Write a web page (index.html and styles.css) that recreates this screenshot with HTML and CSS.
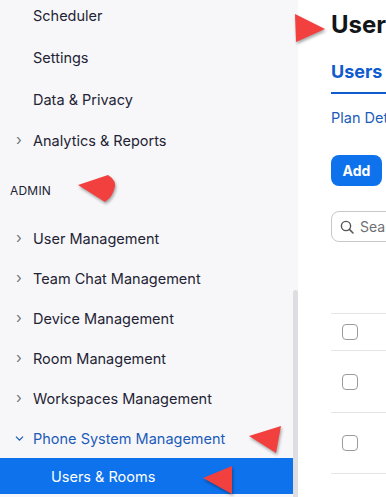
FILE: index.html
```html
<!DOCTYPE html>
<html>
<head>
<meta charset="utf-8">
<link rel="stylesheet" href="styles.css">
</head>
<body>
<div class="page">
  <aside class="sidebar">
    <nav class="nav">
      <ul class="group group-top">
        <li class="item">Scheduler</li>
        <li class="item">Settings</li>
        <li class="item">Data &amp; Privacy</li>
        <li class="item has-chevron short"><span class="chev">›</span>Analytics &amp; Reports</li>
      </ul>
      <div class="section-title">ADMIN</div>
      <ul class="group group-admin">
        <li class="item has-chevron"><span class="chev">›</span>User Management</li>
        <li class="item has-chevron"><span class="chev">›</span>Team Chat Management</li>
        <li class="item has-chevron"><span class="chev">›</span>Device Management</li>
        <li class="item has-chevron"><span class="chev">›</span>Room Management</li>
        <li class="item has-chevron"><span class="chev">›</span>Workspaces Management</li>
        <li class="item has-chevron open"><span class="chev chev-down"><svg width="9" height="6" viewBox="0 0 9 6"><path d="M1 1 L4.5 4.5 L8 1" fill="none" stroke="currentColor" stroke-width="1.3"/></svg></span>Phone System Management</li>
        <li class="sub active">Users &amp; Rooms</li>
      </ul>
    </nav>
    <div class="scrolltrack"><div class="thumb"></div></div>
  </aside>
  <main class="main">
    <h1 class="title">User</h1>
    <div class="tabs"><span class="tab">Users</span></div>
    <a class="plan">Plan Details</a>
    <button class="add">Add</button>
    <div class="search">
      <svg width="14" height="14" viewBox="0 0 14 14"><circle cx="6" cy="6" r="4.6" fill="none" stroke="#555" stroke-width="1.4"/><path d="M9.4 9.4 L13 13" stroke="#555" stroke-width="1.5" stroke-linecap="round"/></svg>
      <span class="ph">Search</span>
    </div>
    <div class="table">
      <div class="thead"></div>
      <div class="row r1"><span class="cb"></span></div>
      <div class="row r2"><span class="cb"></span></div>
      <div class="row r3"><span class="cb"></span></div>
    </div>
  </main>
</div>
<svg class="annot" width="386" height="497" viewBox="0 0 386 497">
  <path d="M295 14 L325 29 L296 42 Z" fill="#f2403f"/>
  <path d="M78 185 L108 175 Q118 181 114 190 Q112 197 105 202 Z" fill="#f2403f"/>
  <path d="M249 436 L281 426 L276 453 Z" fill="#f2403f"/>
  <path d="M203 478 L232 466 L232 494 Z" fill="#f2403f"/>
</svg>
</body>
</html>
```
FILE: styles.css
```css
* { box-sizing: border-box; }
html, body { margin: 0; padding: 0; }
body {
  width: 386px;
  height: 497px;
  overflow: hidden;
  background: #fff;
  font-family: Inter, "Noto Sans", sans-serif;
  position: relative;
}
.page {
  display: flex;
  width: 386px;
  height: 497px;
}
.sidebar {
  width: 298px;
  flex: none;
  background: #f7f7fa;
  display: flex;
  overflow: hidden;
}
.nav {
  width: 293px;
  flex: none;
}
ul { list-style: none; margin: 0; padding: 0; }
.group-top { margin-top: -6px; }
.item {
  height: 42px;
  display: flex;
  align-items: center;
  padding-left: 33px;
  font-size: 14.5px;
  color: #232333;
  position: relative;
}
.item.short { height: 40px; }
.group-admin .item { height: 40px; }
.chev {
  position: absolute;
  left: 14px;
  width: 10px;
  text-align: center;
  color: #6e7680;
  font-size: 15px;
  top: 50%;
  transform: translateY(-55%);
}
.chev-down { transform: translateY(-40%); color: #1c5cb8; line-height: 0; }
.item.open { color: #1c5cb8; }
.section-title {
  height: 58px;
  padding: 23px 0 0 10px;
  font-size: 12px;
  line-height: 16px;
  color: #232333;
  letter-spacing: 0.2px;
}
.sub {
  height: 36px;
  display: flex;
  align-items: center;
  padding-left: 51px;
  font-size: 14.5px;
}
.sub.active {
  background: #0e72ed;
  color: #fff;
}
.scrolltrack {
  width: 5px;
  flex: none;
  padding-top: 290px;
}
.thumb {
  height: 220px;
  background: #dedee2;
  border-radius: 3px 3px 0 0;
}
.main {
  flex: none;
  width: 88px;
  overflow: hidden;
  padding-left: 33px;
  display: flex;
  flex-direction: column;
  align-items: flex-start;
}
.title {
  margin: 11px 0 0;
  font-size: 24px;
  line-height: 28px;
  font-weight: 700;
  color: #131619;
  white-space: nowrap;
}
.tabs {
  margin-top: 22px;
  width: 300px;
  border-bottom: 2px solid #0e5ccd;
  height: 33px;
}
.tab {
  font-size: 18px;
  font-weight: 700;
  color: #0e5ccd;
  line-height: 22px;
  display: block;
}
.plan {
  margin-top: 15px;
  font-size: 14.5px;
  line-height: 18px;
  color: #1c5cb8;
  white-space: nowrap;
}
.add {
  margin-top: 28px;
  width: 51px;
  height: 31px;
  flex: none;
  border: none;
  border-radius: 8px;
  background: #0e72ed;
  color: #fff;
  font-family: inherit;
  font-size: 14px;
  font-weight: 700;
  padding: 0;
}
.search {
  margin-top: 25px;
  width: 200px;
  height: 31px;
  flex: none;
  border: 1px solid #c8c8cc;
  border-radius: 8px;
  display: flex;
  align-items: center;
  gap: 6px;
  padding-left: 8px;
}
.ph { font-size: 14px; color: #6e7076; }
.table { width: 300px; }
.thead {
  height: 72px;
  border-bottom: 1px solid #e4e4e7;
}
.row {
  display: flex;
  align-items: center;
  padding-left: 11px;
  border-bottom: 1px solid #e4e4e7;
}
.r1 { height: 37px; }
.r2 { height: 62px; }
.r3 { height: 61px; }
.cb {
  width: 16px;
  height: 16px;
  border: 1.3px solid #9a9aa0;
  border-radius: 4px;
  background: #fff;
}
.annot {
  position: absolute;
  left: 0;
  top: 0;
  pointer-events: none;
  filter: drop-shadow(1px 2px 1.5px rgba(0,0,0,0.35));
}
```
